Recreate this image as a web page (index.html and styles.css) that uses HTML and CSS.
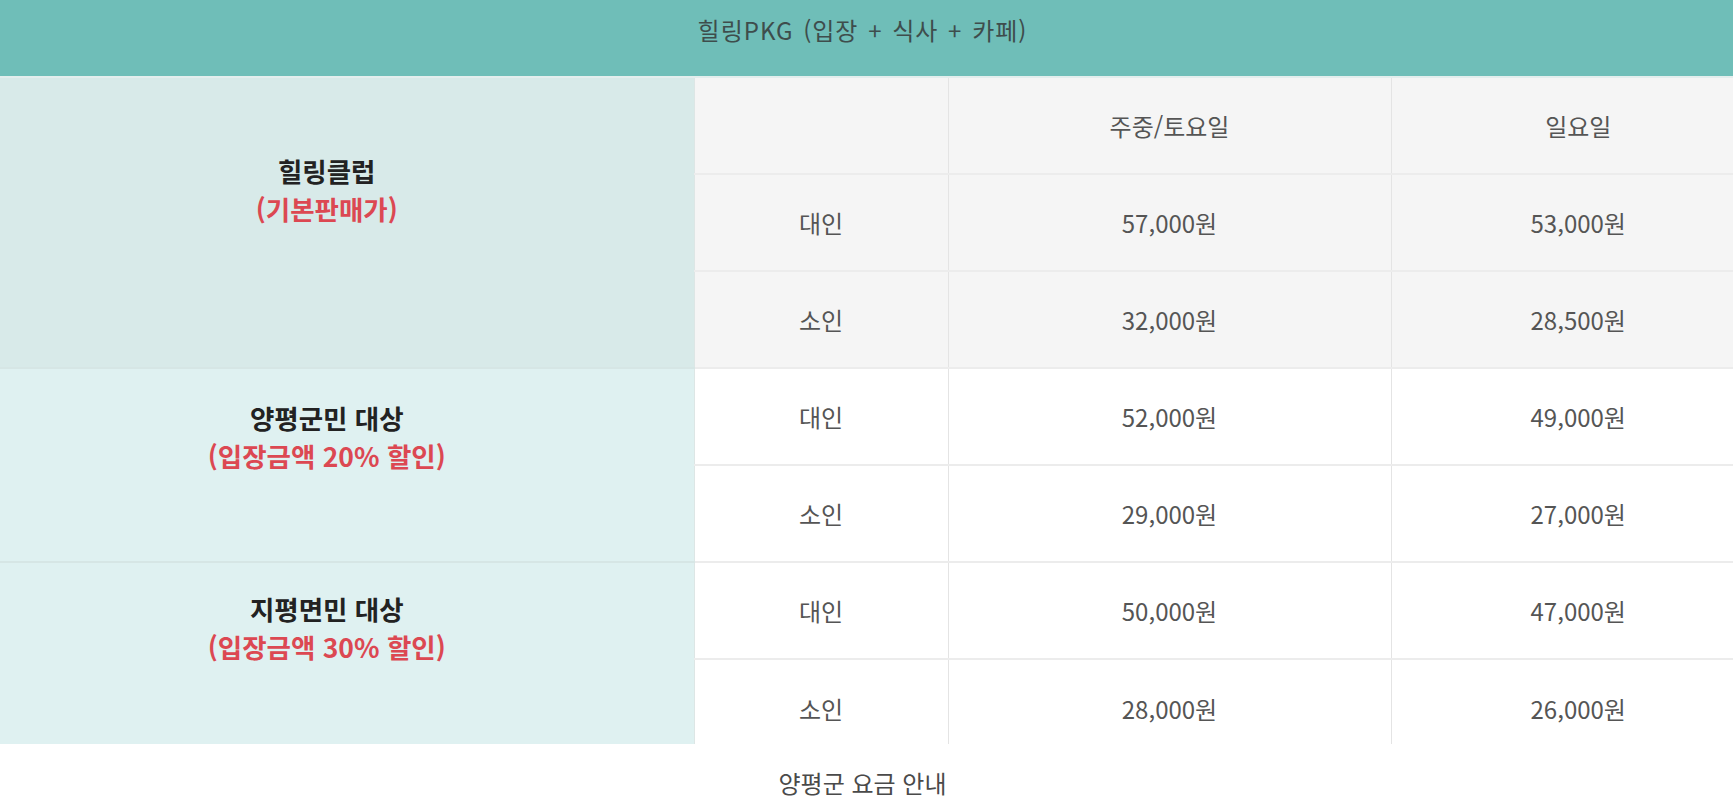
FILE: index.html
```html
<!DOCTYPE html>
<html lang="ko">
<head>
<meta charset="utf-8">
<title>양평군 요금 안내</title>
<link rel="stylesheet" href="styles.css">
</head>
<body>
<div class="page">
  <div class="table-clip">
    <table class="fee">
      <colgroup>
        <col class="c1"><col class="c2"><col class="c3"><col class="c4">
      </colgroup>
      <thead>
        <tr><th colspan="4" class="title">힐링PKG (입장 + 식사 + 카페)</th></tr>
      </thead>
      <tbody>
        <tr class="alt">
          <th rowspan="3" class="grp g1"><span class="name">힐링클럽</span><span class="note">(기본판매가)</span></th>
          <td class="sep"></td><td>주중/토요일</td><td>일요일</td>
        </tr>
        <tr class="alt"><td class="sep">대인</td><td>57,000원</td><td>53,000원</td></tr>
        <tr class="alt end"><td class="sep">소인</td><td>32,000원</td><td>28,500원</td></tr>
        <tr>
          <th rowspan="2" class="grp g2"><span class="name">양평군민 대상</span><span class="note">(입장금액 20% 할인)</span></th>
          <td class="sep">대인</td><td>52,000원</td><td>49,000원</td>
        </tr>
        <tr class="end"><td class="sep">소인</td><td>29,000원</td><td>27,000원</td></tr>
        <tr>
          <th rowspan="2" class="grp g3"><span class="name">지평면민 대상</span><span class="note">(입장금액 30% 할인)</span></th>
          <td class="sep">대인</td><td>50,000원</td><td>47,000원</td>
        </tr>
        <tr class="last"><td class="sep">소인</td><td>28,000원</td><td>26,000원</td></tr>
      </tbody>
    </table>
  </div>
  <p class="caption">양평군 요금 안내</p>
</div>
</body>
</html>
```

FILE: styles.css
```css
html, body {
  margin: 0;
  padding: 0;
  background: #ffffff;
  overflow: hidden;
}

body {
  font-family: "Noto Sans CJK KR", "Noto Sans", sans-serif;
  color: #555555;
}

.page {
  width: 1805px;
  margin-left: -40px;
}

.table-clip {
  height: 744px;
  overflow: hidden;
}

.fee {
  width: 1805px;
  table-layout: fixed;
  border-collapse: collapse;
  border-spacing: 0;
}

.c1 { width: 734px; }
.c2 { width: 254px; }
.c3 { width: 443px; }
.c4 { width: 374px; }

.title {
  height: 77px;
  padding: 0 0 17px;
  box-sizing: border-box;
  background: #6fbeb8;
  color: #3e4d4c;
  font-size: 24px;
  font-weight: 400;
  letter-spacing: 1px;
  word-spacing: 2px;
  text-align: center;
  vertical-align: middle;
  border-bottom: 2px solid #e3eeed;
}

.fee tbody tr {
  height: 97px;
}

.fee td {
  padding: 0;
  font-size: 24px;
  font-weight: 400;
  color: #555555;
  text-align: center;
  vertical-align: middle;
  border-bottom: 2px solid #ececec;
  border-left: 1px solid #e4e4e4;
  background: #ffffff;
}

.fee tr.alt td {
  background: #f5f5f5;
}

.fee td.sep {
  border-left: 1px solid #dde6e5;
}

.fee tr.last td {
  border-bottom: 0;
}

.grp {
  padding: 0 0 56px;
  text-align: center;
  vertical-align: middle;
  font-size: 26.5px;
  font-weight: 700;
  line-height: 38px;
  border-bottom: 2px solid #d6e6e5;
}

.grp.g1 {
  background: #d8eae9;
  padding-bottom: 66px;
}

.grp.g2 {
  background: #dff1f1;
}

.grp.g3 {
  background: #dff1f1;
  padding-bottom: 62px;
}

.grp .name {
  display: block;
  color: #222222;
}

.grp .note {
  display: block;
  color: #dc4852;
}

.caption {
  margin: 21px 0 0;
  text-align: center;
  font-size: 24px;
  line-height: 36px;
  color: #4a4a4a;
}
```
